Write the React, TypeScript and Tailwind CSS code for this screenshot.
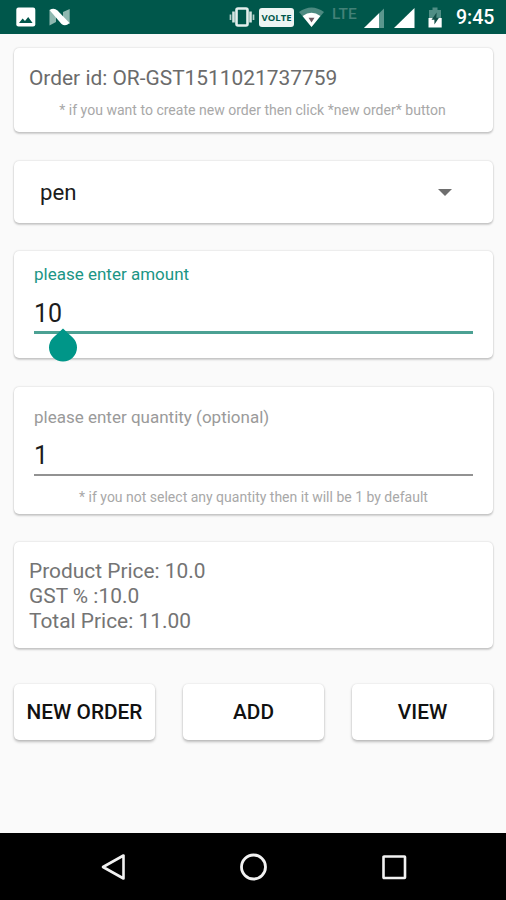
import type { ReactNode } from "react";

function Card({ className, children }: { className: string; children: ReactNode }) {
  return (
    <section
      className={`rounded-[5px] bg-white shadow-[0_0_2px_rgba(0,0,0,0.2),0_2px_2px_rgba(0,0,0,0.17)] ${className}`}
    >
      {children}
    </section>
  );
}

function StatusBar() {
  return (
    <header className="flex h-[34px] shrink-0 items-start bg-[#00574b] text-white">
      <svg className="ml-4 mt-[7px] shrink-0" width="20" height="20" viewBox="0 0 20 20">
        <rect x="0.3" y="0.5" width="19" height="19" rx="2.2" fill="#fff" />
        <path d="M3 16 L6.6 11.5 L9 14 L12.2 10 L16.6 16 Z" fill="#00574b" />
      </svg>
      <svg className="ml-[13px] mt-2 shrink-0" width="21" height="18" viewBox="0 0 21 18">
        <path d="M0.5 2 L7 5 V14 L0.5 17.5 Z M14 4 L20.7 1 V16 L14 12.5 Z" fill="#8fb8b0" />
        <path d="M0.500 2 Q5 -0.500 8.500 2.500 L20.500 15 Q16.500 19 12.500 16 Z" fill="#fff" />
      </svg>
      <svg className="ml-[159px] mt-[7px] shrink-0" width="26" height="20" viewBox="0 0 26 20">
        <rect x="7.500" y="1.500" width="11" height="17" rx="1.5" fill="none" stroke="#e4efed" strokeWidth="2.600" />
        <path d="M4.500 4.500 V15.500 M21.500 4.500 V15.500" stroke="#d4e5e2" strokeWidth="2.600" />
        <path d="M1.500 7.500 V13 M24.500 7.500 V13" stroke="#b5d0cb" strokeWidth="1.700" />
      </svg>
      <div className="ml-1 mt-[8px] flex h-[18.500px] w-[35px] shrink-0 items-center justify-center rounded-[3px] bg-[#edf5f3] font-['Open_Sans',sans-serif] text-[9.500px] font-bold leading-none tracking-[0px] text-[#00574b]">
        VOLTE
      </div>
      <svg className="ml-[5px] mt-[7px] shrink-0" width="25" height="20" viewBox="0 0 25 20">
        <path d="M0 5 Q12.500 -4 25 5 L12.500 20 Z" fill="#4d8a81" />
        <path d="M3.600 9 Q12.500 2.500 21.400 9 L12.500 20 Z" fill="#fff" />
        <path d="M9.500 10.800 H15.500 L12.500 15.500 Z" fill="#6d5961" />
      </svg>
      <span className="ml-[8px] mt-[6px] w-[26px] shrink-0 text-[15.500px] font-medium leading-4 text-[#438177]">LTE</span>
      <svg className="ml-[6px] mt-2 shrink-0" width="21" height="20" viewBox="0 0 21 20">
        <path d="M0 20 L20 0.500 V20 Z" fill="#5b978e" />
        <path d="M0 20 L15 5.200 V20 Z" fill="#fff" />
      </svg>
      <svg className="ml-[9px] mt-2 shrink-0" width="21" height="20" viewBox="0 0 21 20">
        <path d="M0 20 L20.500 0 V20 Z" fill="#fff" />
      </svg>
      <svg className="ml-[13px] mt-[7px] shrink-0" width="14" height="21" viewBox="0 0 14 21">
        <path d="M1 3 H4.500 V0.500 H9.500 V3 H13 V12 H1 Z" fill="#508e85" />
        <path d="M0.500 11 H13.700 V20.500 H0.500 Z" fill="#fff" />
        <path d="M8.700 5.500 L3.500 12.700 H6.400 V17.500 L11 10.700 H8.300 Z" fill="#124f47" />
      </svg>
      <span className="ml-[14px] mt-[7px] text-[19.500px] font-medium leading-[22px]">9:45</span>
    </header>
  );
}

function ActionButton({ label }: { label: string }) {
  return (
    <button className="h-[56px] flex-1 rounded-[5px] bg-white pt-px text-[20.800px] font-medium leading-none text-[#111] shadow-[0_0_2px_rgba(0,0,0,0.12),0_2px_3px_rgba(0,0,0,0.24)]">
      {label}
    </button>
  );
}

export default function App() {
  return (
    <div className="flex h-[900px] w-[506px] flex-col overflow-hidden bg-[#fafafa] font-[Roboto,sans-serif] whitespace-nowrap">
      <StatusBar />
      <main className="flex flex-1 flex-col pl-[14px] pr-[13px] pt-[14px]">
        <Card className="h-[84px] pt-[18px]">
          <p className="pl-[15px] text-[20.900px] leading-[25px] text-[#6b6b6b]">Order id: OR-GST1511021737759</p>
          <p className="mt-[10px] pr-[2px] text-center text-[14.050px] leading-[18px] text-[#a8a8a8]">
            * if you want to create new order then click *new order* button
          </p>
        </Card>
        <Card className="mt-[29px] flex h-[62px] items-center justify-between pl-[26px] pr-[41px]">
          <span className="pt-px text-[22.200px] leading-none text-[#1c1c1c]">pen</span>
          <svg width="14" height="7" viewBox="0 0 14 7">
            <path d="M0 0 H14 L7 7 Z" fill="#6e6e6e" />
          </svg>
        </Card>
        <Card className="mt-[28px] h-[107px] px-[20px] pt-[13px]">
          <label className="block text-[17px] leading-[20px] text-[#1b9585]">please enter amount</label>
          <div className="relative mt-[15px] h-[50px]">
            <p className="h-[32px] text-[25px] leading-[30px] text-[#1c1c1c]">10</p>
            <div className="h-[3px] bg-[#4ba193]" />
            <svg className="absolute left-[15px] top-[29px]" width="28" height="34" viewBox="0 0 28 34">
              <path d="M14 0.500 L23.900 9.700 A14 14 0 1 1 4.100 9.700 Z" fill="#009688" />
            </svg>
          </div>
        </Card>
        <Card className="mt-[29px] h-[127px] px-[20px] pt-[20px]">
          <label className="block text-[17px] leading-[20px] text-[#9a9a9a]">please enter quantity (optional)</label>
          <p className="mt-[14px] h-[33px] text-[25px] leading-[30px] text-[#1c1c1c]">1</p>
          <div className="h-[1.500px] bg-[#929292]" />
          <p className="mt-[12.500px] text-center text-[14px] leading-[18px] text-[#a8a8a8]">
            * if you not select any quantity then it will be 1 by default
          </p>
        </Card>
        <Card className="mt-[28px] h-[106px] pl-[15px] pt-[17px] text-[20.900px] leading-[25px] text-[#747474]">
          <p>Product Price: 10.0</p>
          <p>GST % :10.0</p>
          <p>Total Price: 11.00</p>
        </Card>
        <div className="mt-[36px] flex gap-[28px]">
          <ActionButton label="NEW ORDER" />
          <ActionButton label="ADD" />
          <ActionButton label="VIEW" />
        </div>
      </main>
      <nav className="flex h-[67px] shrink-0 items-center bg-black pl-[101px]">
        <svg width="25" height="28" viewBox="0 0 25 28">
          <path d="M2 14 L22.500 2.500 V25.500 Z" fill="none" stroke="#f2f2f2" strokeWidth="2.600" strokeLinejoin="round" />
        </svg>
        <svg className="ml-[113px]" width="28" height="28" viewBox="0 0 28 28">
          <circle cx="14.500" cy="14" r="12" fill="none" stroke="#f2f2f2" strokeWidth="2.800" />
        </svg>
        <svg className="ml-[114px]" width="26" height="28" viewBox="0 0 26 28">
          <rect x="2.500" y="3.500" width="21.500" height="21.500" rx="0.5" fill="none" stroke="#f2f2f2" strokeWidth="2.600" />
        </svg>
      </nav>
    </div>
  );
}
